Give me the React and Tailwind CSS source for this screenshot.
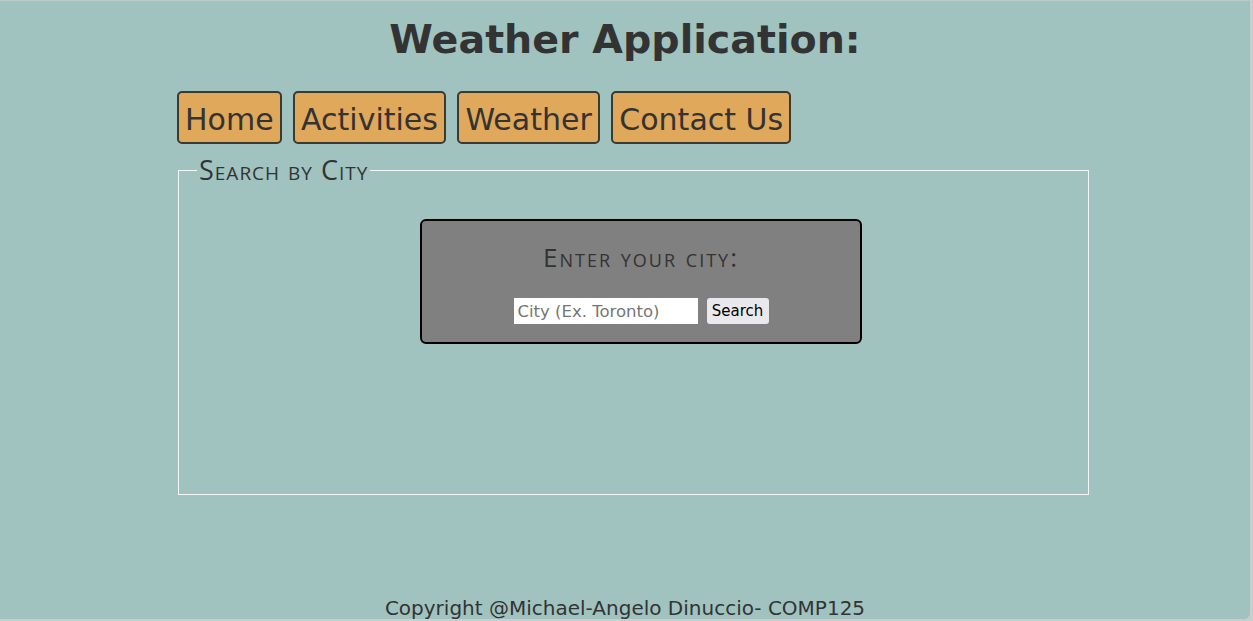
export default function App() {
  const links = ['Home', 'Activities', 'Weather', 'Contact Us'];

  return (
    <div className="h-[621px] w-[1253px] overflow-hidden bg-[#c9cdcc]">
      <div
        className="flex h-[619px] w-[1250px] flex-col rounded-br-md border-t border-[#b9c9c6] bg-[#a0c3c0] text-[#333]"
        style={{ fontFamily: '"DejaVu Sans", Verdana, sans-serif' }}
      >
        {/* header */}
        <h1 className="mt-[13px] text-center text-[39.6px] font-bold leading-[50px]">
          Weather Application:
        </h1>

        {/* nav */}
        <nav className="ml-[177px] mt-[27px] flex gap-[11.5px]">
          {links.map((l) => (
            <a
              key={l}
              href="#"
              className="flex h-[53px] items-center rounded-[5px] border-2 border-[#3a3a33] bg-[#e0a85a] px-[6px] pt-[4px] text-[30px] text-[#333]"
            >
              {l}
            </a>
          ))}
        </nav>

        {/* search */}
        <fieldset className="ml-[178px] mt-[15px] h-[336px] w-[911px] border border-[#f4f6f6] px-0">
          <legend
            className="ml-[18px] px-[2px] text-[27px] leading-[22px] tracking-[1px] text-[#333] [font-variant:small-caps]"
            style={{ fontFamily: '"Open Sans", sans-serif' }}
          >
            Search by City
          </legend>

          <div className="ml-[241px] mt-[38px] flex h-[125px] w-[442px] flex-col items-center rounded-[6px] border-2 border-black bg-[#808080]">
            <h2
              className="mt-[21px] text-[26px] leading-[30px] tracking-[2px] text-[#333] [font-variant:small-caps]"
              style={{ fontFamily: '"Open Sans", sans-serif' }}
            >
              Enter your city:
            </h2>
            <div className="mt-[26px] flex items-center gap-[9px]">
              <input
                type="text"
                placeholder="City (Ex. Toronto)"
                className="h-[26px] w-[184px] bg-white px-[4px] text-[16.5px] text-black outline-none placeholder:text-[#757575]"
                style={{ fontFamily: '"DejaVu Sans", Verdana, sans-serif' }}
              />
              <button
                className="h-[26px] w-[62px] rounded-[3px] bg-[#e9e9ed] text-[15px] text-black"
                style={{ fontFamily: '"DejaVu Sans", Verdana, sans-serif' }}
              >
                Search
              </button>
            </div>
          </div>
        </fieldset>

        {/* footer */}
        <footer className="mt-auto mb-[-1px] text-center text-[20px] leading-[24px] text-[#333]">
          Copyright @Michael-Angelo Dinuccio- COMP125
        </footer>
      </div>
    </div>
  );
}
